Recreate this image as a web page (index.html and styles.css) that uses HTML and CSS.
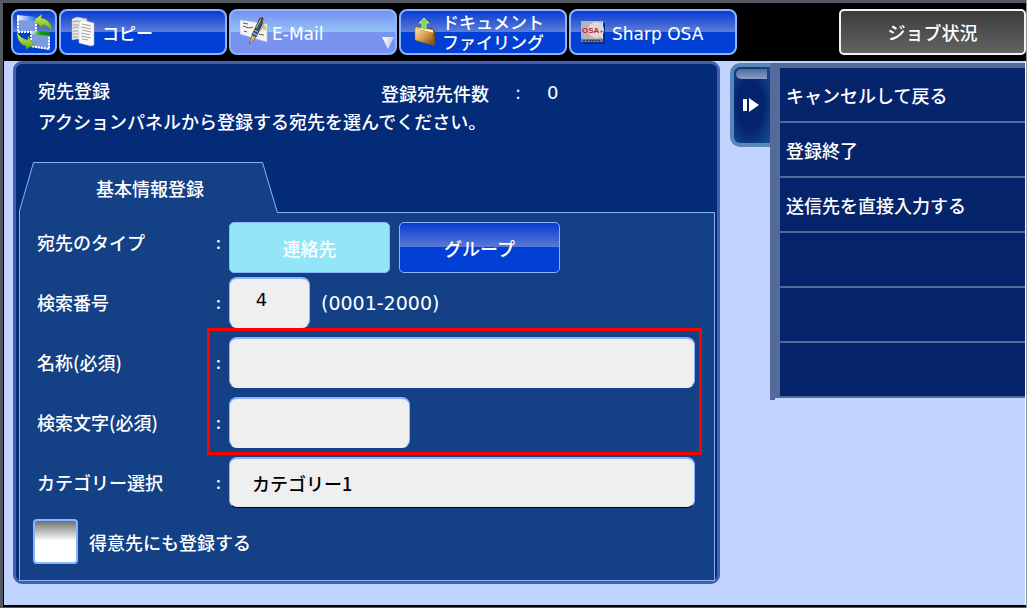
FILE: index.html
```html
<!DOCTYPE html>
<html lang="ja">
<head>
<meta charset="utf-8">
<title>宛先登録</title>
<link rel="stylesheet" href="styles.css">
</head>
<body>
<div class="screen">
  <nav class="modes">
    <button class="mode mode-switch" type="button" aria-label="画面切替">
      <svg class="switch-icon" viewBox="13 11 42 42" aria-hidden="true">
        <defs>
          <linearGradient id="blueBar"><stop offset="0" stop-color="#fff"/><stop offset="1" stop-color="#1766e8"/></linearGradient>
          <linearGradient id="greenBar"><stop offset="0" stop-color="#fff"/><stop offset=".5" stop-color="#169b1c"/><stop offset="1" stop-color="#08850e"/></linearGradient>
          <linearGradient id="leaf" x2="0" y2="1"><stop offset="0" stop-color="#d8ee6a"/><stop offset="1" stop-color="#63ae12"/></linearGradient>
        </defs>
        <path d="M17 16l20 3v13H17z" fill="#7f9be0"/>
        <path d="M18 20v12h18V21" fill="none" stroke="#fff" stroke-width="2" stroke-dasharray="2 1"/>
        <path d="M17 15l20 2v4l-20-1z" fill="url(#blueBar)"/>
        <path d="M31 32h19v18l-19-3z" fill="#7f9be0"/>
        <path d="M31 35v11l18 3V35" fill="none" stroke="#fff" stroke-width="2" stroke-dasharray="2 1"/>
        <path d="M30 31l20 1v4l-20-2z" fill="url(#greenBar)"/>
        <path d="M34 20l8-6-1 4c6 1 11 5 11 13-3-4-6-6-10-6l1 4z" fill="url(#leaf)" stroke="#4b8a14" stroke-width=".5"/>
        <path d="M17 32c3 5 6 7 11 8v-4l6 9-8 4v-3c-6-1-9-7-9-14z" fill="url(#leaf)" stroke="#4b8a14" stroke-width=".5"/>
      </svg>
    </button>
    <button class="mode" type="button">
      <svg class="mode-icon" viewBox="71 19 30 30" aria-hidden="true">
        <path d="M72 21l5-2 10 2v21l-10-1-5 1z" fill="#e9e9e9" stroke="#aaa" stroke-width=".5"/>
        <path d="M73 24l4-1 7 1M73 27h10M73 30l5-1M73 33h5M73 36h5M73 39h5" stroke="#888" stroke-width=".8" fill="none"/>
        <path d="M79 24l3-2 12 3v22l-3 1-12-3z" fill="#fafafa" stroke="#bbb" stroke-width=".5"/>
        <path d="M82 26l9 2M81 29l10 2M82 32l9 2M81 35l9 2M81 38l10 2M82 41l6 1" stroke="#888" stroke-width=".8" fill="none"/>
      </svg>
      <span>コピー</span>
    </button>
    <button class="mode mode-current" type="button">
      <svg class="mode-icon" viewBox="241 19 30 30" aria-hidden="true">
        <path d="M240 22l27 4v18l-27-8z" fill="#f5f5f3" stroke="#bcbcc4" stroke-width=".5"/>
        <path d="M243 25l5 1M243 28l6 2 4-1M244 33l3 1M259 36l5 1" stroke="#555" fill="none"/>
        <path d="M263 28h3v4h-3z" fill="#c8c3b4"/>
        <path d="M260 20l3 0-1 7-6 12-4-2z" fill="#24588b" stroke="#13283e" stroke-width=".8"/>
        <path d="M260 20l3 0-1 5-3-1z" fill="#4a4030"/>
        <path d="M261 21l-5 9M263 23l1 4-4 6M254 32l4 2" stroke="#d0a44c" stroke-width="1.2" fill="none"/>
        <path d="M252 37l4 2-4 5-3 2z" fill="#d9b27a" stroke="#684a27" stroke-width=".6"/>
        <path d="M253 35l4 2" stroke="#d8e2ec"/>
      </svg>
      <span>E-Mail</span>
      <i class="mode-more"></i>
    </button>
    <button class="mode" type="button">
      <svg class="mode-icon" viewBox="410 19 30 30" aria-hidden="true">
        <defs><linearGradient id="folder" x2="1" y2="1"><stop offset="0" stop-color="#ffe7b5"/><stop offset=".5" stop-color="#d99c4e"/><stop offset="1" stop-color="#7a4410"/></linearGradient></defs>
        <path d="M415 28l16 2 3 3v14l-19-4z" fill="#7d5322"/>
        <path d="M415 29l17 3v11l-17-3z" fill="#fff1d0"/>
        <path d="M414 30l4 0 2 2 12 3v12l-18-5z" fill="url(#folder)" stroke="#a66b27" stroke-width=".5"/>
        <path d="M423 20l5 5h-3v7l-4-1v-6h-3z" fill="#7fd642" stroke="#d5f39b" stroke-width=".8"/>
      </svg>
      <span class="two-lines">ドキュメント<br>ファイリング</span>
    </button>
    <button class="mode" type="button">
      <svg class="mode-icon" viewBox="581 19 30 30" aria-hidden="true">
        <path d="M583 25h22v21h-22z" fill="#062b91"/>
        <path d="M581 23h22v21h-22z" fill="#b5b5b7"/>
        <path d="M603 24a11 10 0 0 0 0 17z" fill="#e4e4e4"/>
        <circle cx="596" cy="32" r="8" fill="#dadada"/>
        <path d="M581 41h22v3h-22z" fill="#777"/>
        <path d="M583 42.500h18" stroke="#333" stroke-dasharray="2 1"/>
        <text class="osa-word" x="582" y="35">OSA</text>
        <circle cx="601.500" cy="33.500" r="1" fill="#d31830"/>
      </svg>
      <span>Sharp OSA</span>
    </button>
    <button class="job-status" type="button">ジョブ状況</button>
  </nav>

  <main class="workspace">
    <section class="panel">
      <header class="panel-head">
        <h1 class="title">宛先登録</h1>
        <p class="count"><span>登録宛先件数</span><span>:</span><span>0</span></p>
        <p class="message">アクションパネルから登録する宛先を選んでください。</p>
      </header>
      <div class="tab">
        <svg class="tab-shape" viewBox="0 0 260 51" aria-hidden="true">
          <path d="M0 51V49L14 0h230l15 51z" fill="#144086"/>
          <path d="M.5 51V49L14.500.5h229L258.500 51" fill="none" stroke="#86b2fb"/>
        </svg>
        <h2 class="tab-label">基本情報登録</h2>
      </div>
      <form class="pane">
        <div class="row row-type">
          <span class="label" id="type-label">宛先のタイプ</span><span class="colon">:</span>
          <div class="choices" role="group" aria-labelledby="type-label">
            <button class="choice choice-on" type="button" aria-pressed="true">連絡先</button>
            <button class="choice" type="button" aria-pressed="false">グループ</button>
          </div>
        </div>
        <div class="row row-number">
          <label class="label" for="number">検索番号</label><span class="colon">:</span>
          <div class="number-group">
            <input class="field field-number" id="number" type="text" value="4">
            <span class="range">(0001-2000)</span>
          </div>
        </div>
        <div class="required">
          <div class="row">
            <label class="label" for="name">名称(必須)</label><span class="colon">:</span>
            <input class="field" id="name" type="text">
          </div>
          <div class="row">
            <label class="label" for="initial">検索文字(必須)</label><span class="colon">:</span>
            <input class="field field-short" id="initial" type="text">
          </div>
        </div>
        <div class="row">
          <label class="label" for="category">カテゴリー選択</label><span class="colon">:</span>
          <select class="field field-select" id="category"><option>カテゴリー1</option></select>
        </div>
        <label class="favorite"><input class="tick" type="checkbox"><span>得意先にも登録する</span></label>
      </form>
    </section>

    <aside class="actions">
      <button class="handle" type="button" aria-label="アクションパネルを閉じる">
        <svg class="handle-icon" viewBox="0 0 16 14" aria-hidden="true"><path d="M0 1h4v12H0zM6 0l10 7-10 7z" fill="#fff"/></svg>
      </button>
      <ul class="action-list">
        <li><button class="action" type="button">キャンセルして戻る</button></li>
        <li><button class="action" type="button">登録終了</button></li>
        <li><button class="action" type="button">送信先を直接入力する</button></li>
        <li class="action"></li>
        <li class="action"></li>
        <li class="action"></li>
      </ul>
    </aside>
  </main>
</div>
</body>
</html>
```
FILE: styles.css
```css
* {
  box-sizing: border-box;
}

body {
  margin: 0;
  border-right: 1px solid #969696;
  background: #555861;
  color: #fff;
  font: 500 18px/24px "Noto Sans CJK JP", sans-serif;
}

button,
input,
select {
  margin: 0;
  font: inherit;
  color: inherit;
}

h1,
h2,
p,
ul {
  margin: 0;
  padding: 0;
  font-size: inherit;
  font-weight: inherit;
}

.screen {
  display: flex;
  flex-direction: column;
  min-height: 100vh;
  border: solid #555861;
  border-width: 3px 0 1px 3px;
  background: #000;
}

/* Mode bar */

.modes {
  display: flex;
  align-items: center;
  gap: 2px;
  padding: 6px 0 6px 8px;
}

.mode {
  position: relative;
  display: flex;
  flex: 0 1 168px;
  align-items: center;
  gap: 1px;
  height: 46px;
  padding: 0 0 0 10px;
  border: 2px solid #8ab4ff;
  border-radius: 8px;
  background: linear-gradient(#073bd1, #5e7ed8 50%, #023fd4 50%);
  text-align: left;
  white-space: nowrap;
}

.mode span {
  padding-top: 3px;
  font-family: "DejaVu Sans", "Noto Sans CJK JP", sans-serif;
  font-size: 17px;
  line-height: 20px;
}

.mode .two-lines {
  padding-top: 0;
  font-family: "Noto Sans CJK JP", sans-serif;
}

.mode-switch {
  flex: none;
  width: 46px;
  padding: 0;
}

.mode-current {
  background: linear-gradient(#7690f1, #94c4f6 50%, #7894f0 50%);
}

.switch-icon {
  width: 42px;
  height: 42px;
}

.mode-icon {
  flex: none;
  width: 30px;
  height: 30px;
  overflow: visible;
}

.osa-word {
  fill: #d31830;
  font: bold 8px "Liberation Sans", sans-serif;
}

.mode-more {
  position: absolute;
  right: 1px;
  bottom: 4px;
  width: 12px;
  height: 12px;
  background: linear-gradient(90deg, #fff, #c4c8d0);
  clip-path: polygon(0 0, 100% 0, 50% 100%);
}

.job-status {
  flex: 0 1 187px;
  height: 46px;
  margin-left: auto;
  border: 2px solid #f2f2f2;
  border-radius: 5px;
  background: linear-gradient(#3c3c3c, #636363);
}

/* Work area */

.workspace {
  display: flex;
  flex: 1;
  align-items: flex-start;
  gap: 10px;
  margin: 0 0 2px 1px;
  padding: 0 0 21px 9px;
  border-right: 1px solid #fff;
  background: #c1d3ff;
}

.panel {
  flex: 1;
  min-width: 0;
  padding: 0 2px 0 3px;
  border: 3px solid #455ead;
  border-radius: 9px;
  background: #042b78;
}

.panel-head {
  display: grid;
  grid-template-columns: 343px 1fr;
  padding: 14px 0 29px 19px;
}

.count {
  display: flex;
  gap: 26px;
  padding-top: 3px;
}

.count span + span {
  font-family: "DejaVu Sans", sans-serif;
}

.message {
  grid-column: 1 / -1;
  padding-top: 4px;
}

.tab {
  display: grid;
  width: 260px;
  height: 51px;
  margin-bottom: -1px;
  position: relative;
}

.tab-shape,
.tab-label {
  grid-area: 1 / 1;
}

.tab-shape {
  width: 260px;
  height: 51px;
}

.tab-label {
  align-self: center;
  padding-left: 77px;
}

.pane {
  display: flex;
  flex-direction: column;
  gap: 9px;
  padding: 9px 19px 16px 13px;
  border: 1px solid #86b2fb;
  background: #144086;
}

.row {
  display: grid;
  grid-template-columns: 179px 13px 1fr;
  align-items: center;
  padding-left: 4px;
}

.label,
.colon {
  padding-bottom: 2px;
}

.row-type .label,
.row-type .colon {
  padding-bottom: 12px;
}

.row-number {
  margin-top: -5px;
}

.colon {
  font-size: 16px;
}

.choices {
  display: flex;
  gap: 9px;
}

.choice {
  flex: 0 1 161px;
  height: 51px;
  border: 1px solid #8ab4ff;
  border-radius: 5px;
  background: linear-gradient(#073bd1, #5a79d6 49%, #023fd4 49%);
}

.choice-on {
  background: #92e6f8;
}

.number-group {
  display: flex;
  align-items: center;
  gap: 11px;
}

.range {
  font: 19px/24px "DejaVu Sans", sans-serif;
}

.field {
  width: 100%;
  height: 51px;
  padding: 0 22px;
  border: 1px solid #8ab4ff;
  border-top-width: 2px;
  border-bottom-color: #efefef;
  border-radius: 8px;
  background: #efefef;
  color: #000;
}

.field-number {
  width: 81px;
  padding: 0 16px 8px 0;
  font-family: "DejaVu Sans", sans-serif;
  text-align: center;
}

.field-short {
  width: 181px;
}

.field-select {
  appearance: none;
  border-bottom-color: #000;
}

.required {
  position: relative;
  display: flex;
  flex-direction: column;
  gap: 9px;
}

.required::after {
  content: "";
  position: absolute;
  inset: -9px -7px -7px 174px;
  border: 3px solid #f00;
  pointer-events: none;
}

.favorite {
  display: flex;
  align-items: center;
  gap: 11px;
  padding-top: 2px;
}

.tick {
  appearance: none;
  width: 45px;
  height: 45px;
  border: 2px solid #8ab4ff;
  border-radius: 4px;
  background: linear-gradient(#707070, #fff 48%);
}

/* Action panel */

.actions {
  display: flex;
  flex: 0 0 295px;
  align-items: flex-start;
  padding-top: 2px;
}

.handle {
  position: relative;
  display: grid;
  flex: none;
  place-items: center start;
  width: 40px;
  height: 84px;
  padding: 0 0 0 9px;
  border: 4px solid #5a86b6;
  border-right: 0;
  border-radius: 10px 0 0 10px;
  background: radial-gradient(ellipse at 45% 50%, #04246c 45%, #144f98);
}

.handle::before {
  content: "";
  position: absolute;
  inset: 2px 3px auto 2px;
  height: 10px;
  border-radius: 6px 0 0 6px;
  background: linear-gradient(#4c6b9f, #8c9dc6);
}

.handle-icon {
  width: 16px;
  height: 14px;
}

.action-list {
  position: relative;
  flex: 1;
  border: solid #546a9b;
  border-width: 5px 0 0 10px;
  list-style: none;
}

.action-list::after {
  content: "";
  position: absolute;
  top: 100%;
  left: -10px;
  width: 5px;
  height: 2px;
  background: #546a9b;
}

.action {
  display: block;
  width: 100%;
  height: 55px;
  padding: 0 6px;
  border: 0;
  border-bottom: 2px solid #546a9b;
  background: #06246c;
  text-align: left;
}
```
